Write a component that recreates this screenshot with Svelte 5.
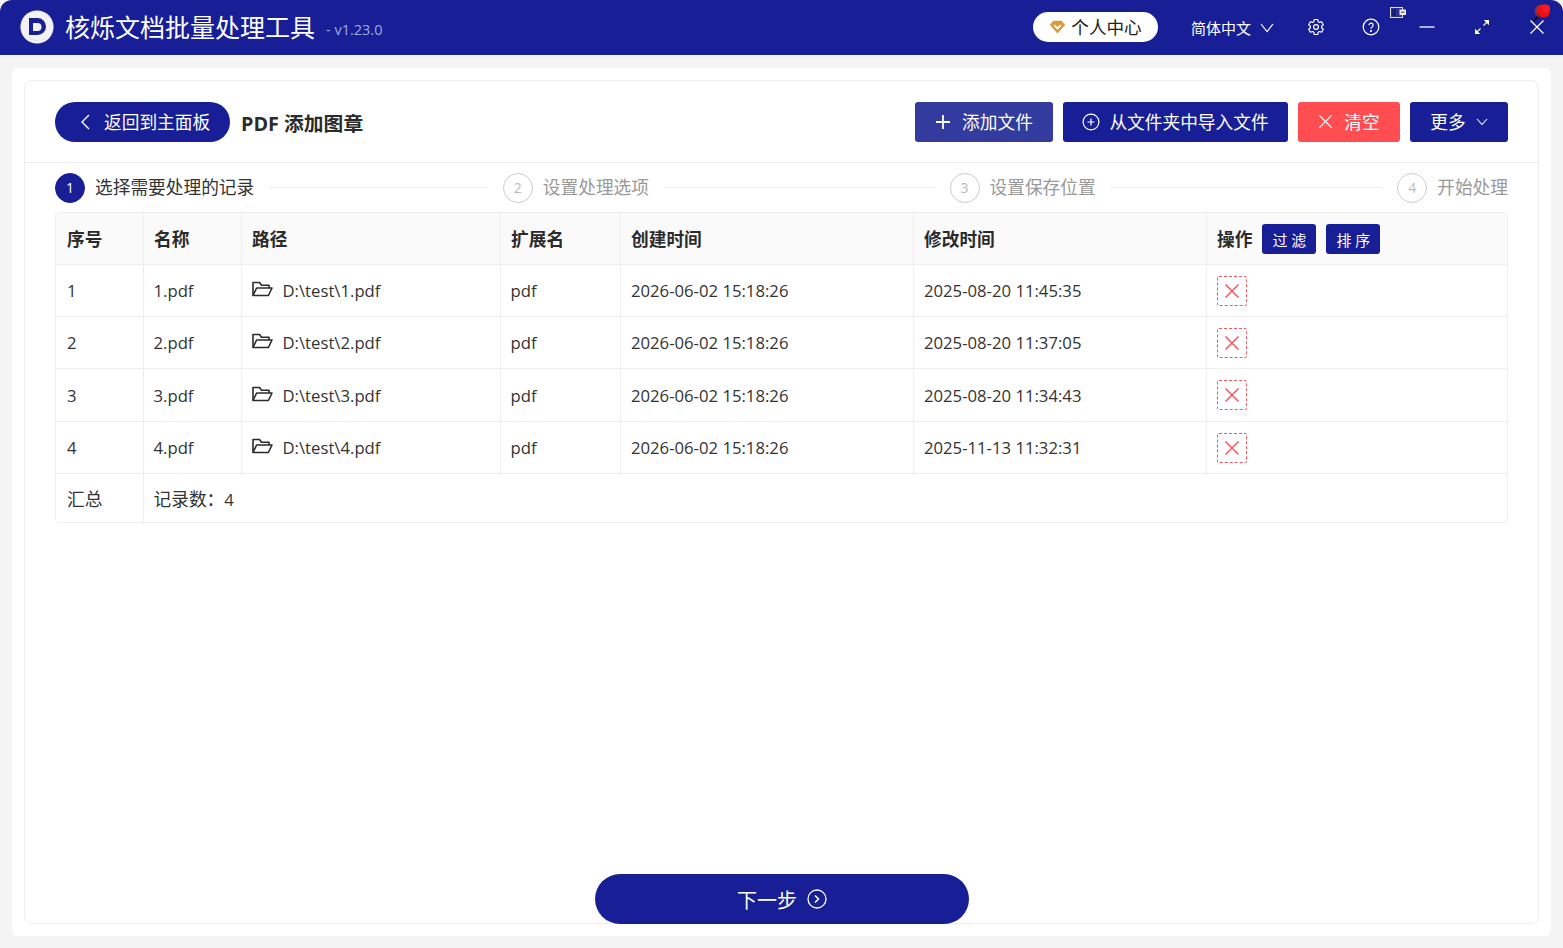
<script>
  const rows = [
    { n: 1, created: '2026-06-02 15:18:26', modified: '2025-08-20 11:45:35' },
    { n: 2, created: '2026-06-02 15:18:26', modified: '2025-08-20 11:37:05' },
    { n: 3, created: '2026-06-02 15:18:26', modified: '2025-08-20 11:34:43' },
    { n: 4, created: '2026-06-02 15:18:26', modified: '2025-11-13 11:32:31' }
  ];
  const steps = [
    { n: 1, label: '选择需要处理的记录', active: true },
    { n: 2, label: '设置处理选项' },
    { n: 3, label: '设置保存位置' },
    { n: 4, label: '开始处理' }
  ];
</script>

<div class="window">
  <header class="titlebar">
    <svg class="logo" viewBox="0 0 36 36" width="36" height="36">
      <circle cx="18" cy="18" r="16.6" fill="#f2f1f5" />
      <path d="M5.5 24a14.5 14.5 0 0 0 22 4.5a15 15 0 0 1-22-4.5z" fill="#b9b8c4" />
      <path d="M10 9h8.5a8.5 8.5 0 0 1 0 17H10z" fill="#171e96" />
      <path d="M14 14h4.5a4 4 0 0 1 0 8H14z" fill="#f2f1f5" />
    </svg>
    <span class="apptitle">核烁文档批量处理工具</span>
    <span class="version">- v1.23.0</span>
    <div class="spacer"></div>
    <button class="userbtn">
      <svg viewBox="0 0 17 14" width="17" height="14"><path d="M4.3.8h8.4l3.4 4.2-7.6 8.4L.9 5z" fill="#d99a3a" /><path d="M5.2 5.2l3.3 3.3 3.3-3.3" fill="none" stroke="#fff" stroke-width="1.8" /></svg>
      个人中心
    </button>
    <button class="lang">
      简体中文
      <svg viewBox="0 0 14 10" width="14" height="10"><path d="M1 1l6 7.5L13 1" fill="none" stroke="#fff" stroke-width="1.2" /></svg>
    </button>
    <svg class="gear" viewBox="0 0 18 18" width="18" height="18" fill="none" stroke="#fff" stroke-width="1.2">
      <path d="M7.3 1.5h3.4l.5 2.2 1.2.7 2.2-.7 1.7 3-1.7 1.5v1.5l1.7 1.5-1.7 3-2.2-.7-1.2.7-.5 2.3H7.3l-.5-2.3-1.2-.7-2.2.7-1.7-3 1.7-1.5V8.2L1.7 6.7l1.7-3 2.2.7 1.2-.7z" stroke-linejoin="round" />
      <circle cx="9" cy="9" r="2.4" />
    </svg>
    <svg class="help" viewBox="0 0 18 18" width="18" height="18" fill="none" stroke="#fff" stroke-width="1.2">
      <circle cx="9" cy="9" r="7.8" />
      <path d="M6.9 7.2a2.1 2.1 0 1 1 3.2 1.8c-.7.4-1.1.8-1.1 1.7" />
      <circle cx="9" cy="13" r=".5" fill="#fff" />
    </svg>
    <svg class="wctl minbtn" viewBox="0 0 16 16" width="16" height="16"><path d="M.5 8h15" stroke="#fff" stroke-width="1.3" /></svg>
    <svg class="wctl maxbtn" viewBox="0 0 16 16" width="16" height="16" fill="#fff">
      <path d="M1.5 14.5l5-5M9.5 6.5l5-5" stroke="#fff" stroke-width="1.2" />
      <path d="M1 15v-5.2L6.2 15zM15 1v5.2L9.8 1z" />
    </svg>
    <svg class="wctl closebtn" viewBox="0 0 16 16" width="16" height="16"><path d="M1.5 1.5l13 13M14.5 1.5l-13 13" stroke="#fff" stroke-width="1.3" /></svg>
    <svg class="tray" viewBox="0 0 16 11" width="16" height="11">
      <rect x=".5" y=".5" width="12" height="10" fill="#2a3190" stroke="#ddd" />
      <rect x="2" y="2" width="4" height="7" fill="#1a2070" />
      <rect x="9.5" y="2.5" width="6.5" height="5.5" fill="#eee" /><rect x="11" y="4.5" width="3.5" height="1.5" fill="#777" />
    </svg>
    <svg class="pin" viewBox="0 0 19 19" width="19" height="19">
      <path d="M.8 18l5.5-5.5" stroke="#0c0c0c" stroke-width="1.8" />
      <circle cx="8.2" cy="8" r="6.6" fill="#8a3040" />
      <path d="M4 11l4 4 2-2-4-4z" fill="#5a1a20" />
      <circle cx="10.8" cy="8" r="6.4" fill="#ee1016" />
      <circle cx="13" cy="5.5" r="4" fill="#fa1a1e" />
    </svg>
  </header>

  <main class="sheet">
    <section class="card">
      <div class="toolbar">
        <button class="back">
          <svg viewBox="0 0 10 16" width="10" height="16"><path d="M9 1L2 8l7 7" fill="none" stroke="#fff" stroke-width="1.4" /></svg>
          <span class="txt">返回到主面板</span>
        </button>
        <h1>PDF 添加图章</h1>
        <div class="spacer"></div>
        <button class="act add">
          <svg viewBox="0 0 16 16" width="16" height="16"><path d="M8 1v14M1 8h14" stroke="#fff" stroke-width="1.8" /></svg>
          <span class="txt">添加文件</span>
        </button>
        <button class="act import">
          <svg viewBox="0 0 18 18" width="18" height="18" fill="none" stroke="#fff" stroke-width="1.2"><circle cx="9" cy="9" r="7.9" /><path d="M9 5.5v7M5.5 9h7" /></svg>
          <span class="txt">从文件夹中导入文件</span>
        </button>
        <button class="act clear">
          <svg viewBox="0 0 16 16" width="15" height="15"><path d="M1.5 1.5l13 13M14.5 1.5l-13 13" stroke="#fff" stroke-width="1.4" /></svg>
          <span class="txt">清空</span>
        </button>
        <button class="act more">
          <span class="txt">更多</span>
          <svg viewBox="0 0 12 8" width="12" height="8"><path d="M1 1l5 5.5L11 1" fill="none" stroke="#fff" stroke-width="1.1" /></svg>
        </button>
      </div>

      <div class="steps">
        {#each steps as s, i}
          {#if i > 0}<span class="line line{i}"></span>{/if}
          <div class="step" class:active={s.active}>
            <span class="num">{s.n}</span>
            <span class="lbl">{s.label}</span>
          </div>
        {/each}
      </div>

      <div class="tablewrap">
        <table>
          <colgroup>
            <col class="c1" /><col class="c2" /><col class="c3" /><col class="c4" /><col class="c5" /><col class="c6" /><col />
          </colgroup>
          <thead>
            <tr>
              <th>序号</th><th>名称</th><th>路径</th><th>扩展名</th><th>创建时间</th><th>修改时间</th>
              <th><div class="ops">操作<button class="mini first">过 滤</button><button class="mini">排 序</button></div></th>
            </tr>
          </thead>
          <tbody>
            {#each rows as r}
              <tr class="r{r.n}">
                <td>{r.n}</td>
                <td>{r.n}.pdf</td>
                <td>
                  <div class="path">
                    <svg viewBox="0 0 21 16" width="21" height="16" fill="none" stroke="#2b2b2b" stroke-width="1.6" stroke-linejoin="round">
                      <path d="M1 14.5V1.5h6.5l2 2.8H17V7" />
                      <path d="M1 14.5L4.6 7H20l-3.6 7.5z" />
                    </svg>
                    <span>D:\test\{r.n}.pdf</span>
                  </div>
                </td>
                <td>pdf</td>
                <td>{r.created}</td>
                <td>{r.modified}</td>
                <td>
                  <button class="del" aria-label="删除">
                    <svg viewBox="0 0 16 16" width="16" height="16"><path d="M1.5 1.5l13 13M14.5 1.5l-13 13" stroke="#f5575c" stroke-width="1.5" /></svg>
                  </button>
                </td>
              </tr>
            {/each}
            <tr class="sum">
              <td>汇总</td>
              <td colspan="6">记录数：<span class="count">4</span></td>
            </tr>
          </tbody>
        </table>
      </div>

      <div class="grow"></div>

      <div class="footer">
        <button class="next">
          下一步
          <svg viewBox="0 0 20 20" width="20" height="20" fill="none" stroke="#fff" stroke-width="1.3"><circle cx="10" cy="10" r="9" /><path d="M8 6.5l3.5 3.5L8 13.5" stroke-width="1.6" /></svg>
        </button>
      </div>
    </section>
  </main>
</div>

<style>
  :global(body) {
    margin: 0;
    background: #f4f4f4;
    font-family: "Open Sans", "Noto Sans CJK SC", "Noto Sans", sans-serif;
    color: #333;
  }
  button {
    font: inherit;
    border: 0;
    cursor: pointer;
    padding: 0;
  }
  .window {
    width: 1563px;
    height: 948px;
    display: flex;
    flex-direction: column;
    overflow: hidden;
  }
  .titlebar {
    position: relative;
    height: 55px;
    flex: none;
    background: #171e96;
    border-radius: 12px 12px 0 0;
    display: flex;
    align-items: center;
    color: #fff;
    padding-left: 19px;
    box-sizing: border-box;
  }
  .logo {
    flex: none;
    margin-top: -1px;
  }
  .apptitle {
    margin-left: 10px;
    font-size: 25px;
    line-height: 55px;
    white-space: nowrap;
    width: 251px;
  }
  .version {
    margin-left: 10px;
    margin-top: 3px;
    font-size: 14.5px;
    color: #a3a8db;
  }
  .spacer {
    flex: 1;
  }
  .userbtn {
    width: 125px;
    height: 30px;
    margin-top: -2px;
    border-radius: 15px;
    background: #fff;
    color: #222;
    font-size: 17.6px;
    display: flex;
    align-items: center;
    justify-content: center;
    gap: 5px;
    white-space: nowrap;
  }
  .lang {
    margin-left: 33px;
    background: none;
    color: #fff;
    font-size: 15px;
    display: flex;
    align-items: center;
    gap: 9px;
    white-space: nowrap;
  }
  .gear {
    margin-left: 33px;
    margin-top: -2px;
  }
  .help {
    margin-left: 37px;
    margin-top: -2px;
  }
  .wctl {
    flex: none;
    margin-top: -1px;
  }
  .minbtn {
    margin-left: 39px;
  }
  .maxbtn {
    margin-left: 39px;
  }
  .closebtn {
    margin-left: 39px;
    margin-right: 18px;
  }
  .tray {
    position: absolute;
    left: 1390px;
    top: 7px;
  }
  .pin {
    position: absolute;
    left: 1533px;
    top: 3px;
  }
  .sheet {
    flex: 1;
    margin: 13px 12px 12px;
    background: #fff;
    border-radius: 6px;
    padding: 12px;
    display: flex;
    min-height: 0;
    box-sizing: border-box;
  }
  .card {
    flex: 1;
    border: 1px solid #eeeeee;
    border-radius: 8px;
    display: flex;
    flex-direction: column;
    box-sizing: border-box;
    min-width: 0;
  }
  .toolbar {
    height: 82px;
    flex: none;
    display: flex;
    align-items: center;
    padding: 0 30px;
    border-bottom: 1px solid #eeeeee;
    box-sizing: border-box;
  }
  .txt {
    margin-top: -2px;
  }
  .back {
    width: 175px;
    height: 40px;
    border-radius: 20px;
    background: #171e96;
    color: #fff;
    font-size: 17.7px;
    display: flex;
    align-items: center;
    gap: 14px;
    padding-left: 25px;
    box-sizing: border-box;
    white-space: nowrap;
  }
  h1 {
    margin: 1px 0 0 11px;
    font-size: 19.8px;
    font-weight: 700;
    color: #2b2b2b;
    white-space: nowrap;
  }
  .act {
    height: 40px;
    border-radius: 3px;
    color: #fff;
    font-size: 17.7px;
    display: flex;
    align-items: center;
    justify-content: center;
    white-space: nowrap;
    margin-left: 10px;
  }
  .add {
    width: 138px;
    background: #343b9f;
    gap: 11px;
  }
  .import {
    width: 225px;
    background: #171e96;
    gap: 9px;
  }
  .clear {
    width: 102px;
    background: #ff4d52;
    gap: 11px;
  }
  .more {
    width: 98px;
    background: #171e96;
    gap: 10px;
  }
  .steps {
    height: 49px;
    flex: none;
    display: flex;
    align-items: center;
    padding: 0 30px;
    box-sizing: border-box;
  }
  .step {
    display: flex;
    align-items: center;
    gap: 10px;
    white-space: nowrap;
    flex: none;
  }
  .num {
    width: 30px;
    height: 30px;
    border-radius: 50%;
    border: 1px solid #ccc;
    color: #bbb;
    font-size: 14px;
    display: flex;
    align-items: center;
    justify-content: center;
    box-sizing: border-box;
  }
  .lbl {
    font-size: 17.7px;
    color: #999;
    line-height: 24px;
    margin-top: -1px;
  }
  .active .num {
    background: #171e96;
    border-color: #171e96;
    color: #fff;
  }
  .active .lbl {
    color: #333;
  }
  .line {
    height: 1px;
    background: #eeeeee;
    margin: 0 15px;
  }
  .line1 {
    flex: 219 1 0;
  }
  .line2 {
    flex: 271 1 0;
  }
  .line3 {
    flex: 272 1 0;
  }
  .tablewrap {
    margin: 0 30px;
    border: 1px solid #eeeeee;
    border-radius: 4px;
    flex: none;
    overflow: hidden;
  }
  table {
    width: 100%;
    table-layout: fixed;
    border-collapse: collapse;
    font-size: 16.7px;
    color: #333;
  }
  .c1 {
    width: 87px;
  }
  .c2 {
    width: 98px;
  }
  .c3 {
    width: 259px;
  }
  .c4 {
    width: 120px;
  }
  .c5,
  .c6 {
    width: 293px;
  }
  th {
    height: 51px;
    background: #fafafa;
    text-align: left;
    font-weight: 700;
    font-size: 17.7px;
    color: #2b2b2b;
    padding: 0 10px;
    border-right: 1px solid #eeeeee;
    border-bottom: 1px solid #eeeeee;
    box-sizing: border-box;
  }
  td {
    height: 52px;
    padding: 1px 10px 0;
    border-right: 1px solid #eeeeee;
    border-bottom: 1px solid #eeeeee;
    box-sizing: border-box;
    white-space: nowrap;
  }
  th:first-child,
  td:first-child {
    padding-left: 11px;
  }
  th:not(:first-child),
  td:nth-child(5),
  td:nth-child(6) {
    padding-left: 10.5px;
  }
  th:last-child,
  td:last-child {
    border-right: 0;
  }
  tr.r3 td {
    height: 53px;
  }
  tr.sum td {
    height: 49px;
    padding-top: 0;
    border-bottom: 0;
    font-size: 17.7px;
  }
  .count {
    font-size: 16.7px;
  }
  .ops {
    display: flex;
    align-items: center;
  }
  .mini {
    width: 54px;
    height: 30px;
    margin-top: 2px;
    background: #171e96;
    color: #fff;
    font-size: 15px;
    font-weight: 400;
    border-radius: 3px;
    margin-left: 10px;
    white-space: nowrap;
  }
  .path {
    display: flex;
    align-items: center;
    gap: 10px;
  }
  .path svg {
    margin-top: -3px;
    flex: none;
  }
  .del {
    width: 30px;
    height: 30px;
    background: #fff;
    border: 1px dashed #f5575c;
    border-radius: 2px;
    display: flex;
    align-items: center;
    justify-content: center;
    box-sizing: border-box;
  }
  .grow {
    flex: 1;
  }
  .footer {
    flex: none;
    display: flex;
    justify-content: center;
    margin-bottom: -1px;
  }
  .next {
    width: 374px;
    height: 50px;
    margin-left: 1px;
    border-radius: 25px;
    background: #171e96;
    color: #fff;
    font-size: 20px;
    display: flex;
    align-items: center;
    justify-content: center;
    gap: 10px;
  }
</style>
